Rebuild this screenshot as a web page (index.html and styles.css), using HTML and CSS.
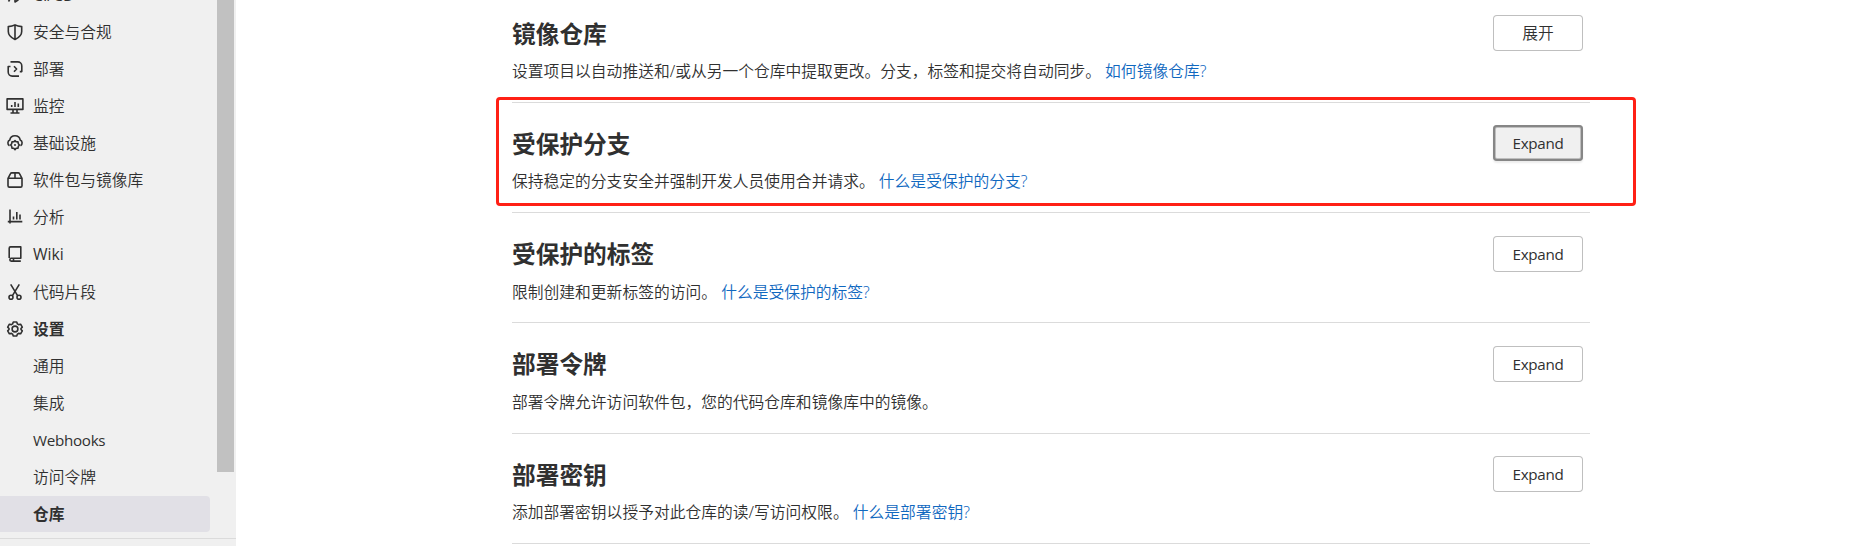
FILE: index.html
```html
<!DOCTYPE html>
<html lang="zh-CN">
<head>
<meta charset="utf-8">
<title>仓库设置</title>
<link rel="stylesheet" href="styles.css">
</head>
<body>
<div class="page">
  <aside class="sidebar">
    <nav class="nav">
      <a class="item"><svg class="icon" viewBox="0 0 16 16"><path d="M3 9l3-5c2-3 5-3.500 8-3.200 0 3-1 6-3.500 8L7 11.500zM5 10.500l-2 .5 1.500-3M8 11v4l3-2V9M3 12l-1.500 2.500"/></svg><span class="latin">CI/CD</span></a>
      <a class="item"><svg class="icon" viewBox="0 0 16 16"><path d="M8 .9C6.300 1.900 4 2.500 1.300 2.600v4.900C1.300 11 4 13.600 8 15.500c4-1.900 6.700-4.500 6.700-8V2.600C12 2.500 9.700 1.900 8 .9zM8 1v14"/></svg><span>安全与合规</span></a>
      <a class="item"><svg class="icon" viewBox="0 0 16 16"><path d="M3.500.9h7.300a4 4 0 0 1 4 4v5.700h-2M12 15.100H5.200a4 4 0 0 1-4-4V5.500H3.500M7 5.300 9.600 8 7 10.700"/></svg><span>部署</span></a>
      <a class="item"><svg class="icon" viewBox="0 0 16 16"><path d="M.1.900h15.800v10.500H.1zM3.500 15h9M6 11.500V15M10 11.500V15M4.700 7v2M8 4v5M11.300 5.500V9"/></svg><span>监控</span></a>
      <a class="item"><svg class="icon" viewBox="0 0 16 16"><path d="M2.500 10.700A3.200 3.200 0 0 1 2.800 5C3.200 2.500 5.200.800 8 .800s4.800 1.700 5.200 4.200a3.200 3.200 0 0 1 .3 5.700M8 5.700l1.200 1.100 1.800.1.300 1.700 1 1.400-1 1.400-.3 1.700-1.800.2L8 14.600l-1.200-1.300-1.800-.2-.3-1.700-1-1.400 1-1.400L5 6.900l1.800-.1z"/><circle class="solid" cx="8" cy="10" r="1"/></svg><span>基础设施</span></a>
      <a class="item"><svg class="icon" viewBox="0 0 16 16"><path d="M1 6.300 3.500 1.700Q3.900.900 4.800.900h6.400q.9 0 1.300.8L15 6.300v7.400q0 1.400-1.400 1.400H2.400Q1 15.100 1 13.700zM1 6.300h14M8 1v5"/></svg><span>软件包与镜像库</span></a>
      <a class="item"><svg class="icon" viewBox="0 0 16 16"><path d="M3 .5v14M.8 12.600h14.500M6.500 7.500v3M9.800 3v7.500M13 5.500v5"/></svg><span>分析</span></a>
      <a class="item"><svg class="icon" viewBox="0 0 16 16"><path d="M2.200 12V2.200Q2.200.900 3.500.900h10.300v11.300H4a1.500 1.500 0 0 0 0 2.900h9.800M6.500 12.500v3.300"/></svg><span class="latin">Wiki</span></a>
      <a class="item"><svg class="icon" viewBox="0 0 16 16"><path d="M3.700.3 10.700 11.800M12.300.3 5.300 11.800"/><circle cx="4" cy="13.300" r="2"/><circle cx="12" cy="13.300" r="2"/></svg><span>代码片段</span></a>
      <a class="item strong"><svg class="icon" viewBox="0 0 16 16"><path d="M6.300 1h3.400l.7 1.900 1.200.7 2-.4 1.700 2.900L14 7.500v1l1.300 1.400-1.700 2.900-2-.4-1.200.7-.7 1.900H6.300l-.7-1.900-1.200-.7-2 .4L.7 9.900 2 8.500v-1L.7 6.100l1.700-2.900 2 .4 1.200-.7z"/><circle cx="8" cy="8" r="2.900"/></svg><span>设置</span></a>
      <a class="item sub"><span>通用</span></a>
      <a class="item sub"><span>集成</span></a>
      <a class="item sub"><span class="narrow">Webhooks</span></a>
      <a class="item sub"><span>访问令牌</span></a>
      <a class="item sub strong active"><span>仓库</span></a>
    </nav>
    <div class="scrollbar"><div class="thumb"></div></div>
    <div class="collapse"></div>
  </aside>
  <main class="content">
    <section class="section">
      <div class="text"><h4>镜像仓库</h4><p>设置项目以自动推送和/或从另一个仓库中提取更改。分支，标签和提交将自动同步。 <a>如何镜像仓库?</a></p></div>
      <button class="btn">展开</button>
    </section>
    <section class="section marked">
      <div class="text"><h4>受保护分支</h4><p>保持稳定的分支安全并强制开发人员使用合并请求。 <a>什么是受保护的分支?</a></p></div>
      <button class="btn focused"><span class="narrow">Expand</span></button>
    </section>
    <section class="section">
      <div class="text"><h4>受保护的标签</h4><p>限制创建和更新标签的访问。 <a>什么是受保护的标签?</a></p></div>
      <button class="btn"><span class="narrow">Expand</span></button>
    </section>
    <section class="section">
      <div class="text"><h4>部署令牌</h4><p>部署令牌允许访问软件包，您的代码仓库和镜像库中的镜像。</p></div>
      <button class="btn"><span class="narrow">Expand</span></button>
    </section>
    <section class="section">
      <div class="text"><h4>部署密钥</h4><p>添加部署密钥以授予对此仓库的读/写访问权限。 <a>什么是部署密钥?</a></p></div>
      <button class="btn"><span class="narrow">Expand</span></button>
    </section>
  </main>
</div>
</body>
</html>
```
FILE: styles.css
```css
*, *::after { box-sizing: border-box; }
body {
  margin: 0;
  background: #fff;
  color: #303030;
  font: 350 15.75px/22px "Noto Sans", "Noto Sans CJK SC", sans-serif;
}
.page { display: flex; height: 546px; overflow: hidden; }
.sidebar {
  flex: none;
  width: 236px;
  height: 546px;
  display: grid;
  grid-template: 538px 8px / 217px 18px;
  background: #f0f0f0;
  overflow: hidden;
}
.nav { margin-top: -23px; height: 561px; overflow: hidden; }
.item {
  display: flex;
  align-items: center;
  gap: 10px;
  width: 210px;
  height: 36px;
  margin-bottom: 1.070px;
  padding-left: 7px;
  white-space: nowrap;
}
.sub { padding-left: 33px; }
.strong { font-weight: 600; }
.active { background: #e1e0e6; border-radius: 0 4px 4px 0; }
.latin, .narrow { font-family: "Open Sans", "Noto Sans", sans-serif; font-weight: 400; }
.narrow { font-size: 15.200px; letter-spacing: -.300px; }
.icon {
  flex: none;
  width: 16px;
  height: 16px;
  overflow: visible;
  fill: none;
  stroke: #303030;
  stroke-width: 1.600;
  stroke-linejoin: round;
}
.solid { fill: #303030; stroke: none; }
.thumb { width: 17px; height: 472px; background: #c1c1c1; }
.collapse { grid-column: 1 / 3; width: 236px; border-top: 1px solid #dbdbdb; }
.content { flex: none; width: 1078px; margin: -7.300px 0 0 276px; }
.section {
  position: relative;
  display: flex;
  justify-content: space-between;
  align-items: flex-start;
  height: 110.250px;
  padding: 22.400px 7px 0 0;
  border-bottom: 1px solid #dbdbdb;
}
.text { white-space: nowrap; }
h4 { margin: 2.600px 0 0; font-size: 23.700px; line-height: 32px; font-weight: 700; }
p { margin: 10.400px 0 0; line-height: 22px; letter-spacing: .020px; }
p a { color: #1068bf; }
.btn {
  width: 90px;
  height: 36px;
  padding: 0;
  border: 0;
  border-radius: 4px;
  background: #fff;
  box-shadow: inset 0 0 0 1px #bfbfbf;
  color: #303030;
  font: inherit;
}
.focused { background: #f0f0f0; box-shadow: inset 0 0 0 2px #868686, inset 0 0 0 3px #bfbfbf, 0 2px 2px rgba(0, 0, 0, .08); }
.marked::after {
  content: "";
  position: absolute;
  left: -16px;
  top: -6px;
  width: 1140px;
  height: 109px;
  border: 3px solid #ff2015;
  border-radius: 4px;
}
```
